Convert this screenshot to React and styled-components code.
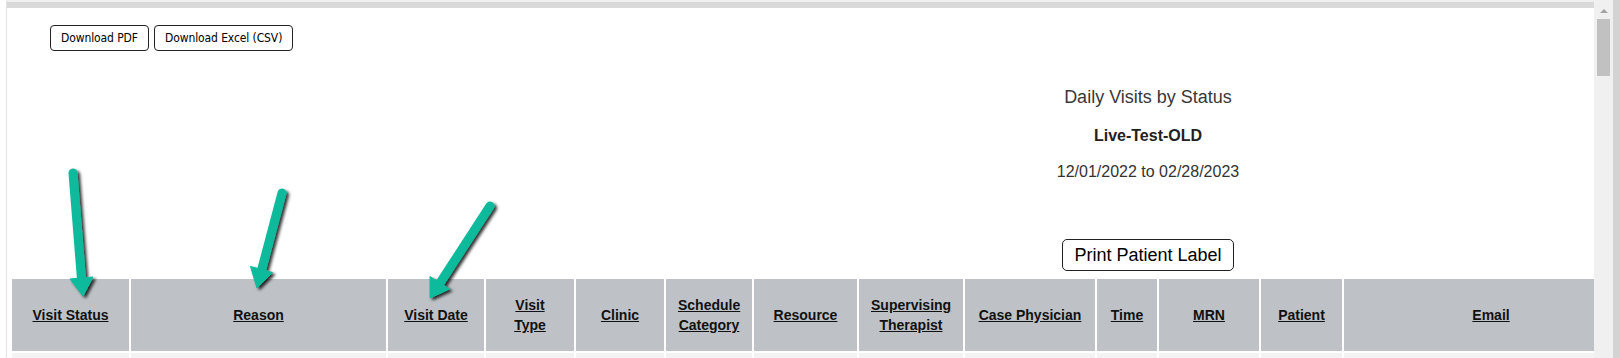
import React from 'react'
import styled, { createGlobalStyle } from 'styled-components'

const GlobalStyle = createGlobalStyle`
    * { box-sizing: border-box; }
    body {
        margin: 0;
        background: #ffffff;
        font-family: "Liberation Sans", Arial, sans-serif;
    }
`;

///////////////////////////////////////////////////////
const Page = styled.div`
    position: relative;
    display: flex;
    width: 1620px;
    height: 358px;
    overflow: hidden;
    background: #ffffff;
`;
///////////////////////////////////////////////////////
const Gutter = styled.div`
    width: 6px;
    flex: none;
`;
///////////////////////////////////////////////////////
const Frame = styled.div`
    flex: 1;
    min-width: 0;
    display: flex;
    border-left: 1px solid #e2e2e2;
`;
///////////////////////////////////////////////////////
const Pane = styled.div`
    flex: 1;
    min-width: 0;
    display: flex;
    flex-direction: column;
`;
///////////////////////////////////////////////////////
const TopStrip = styled.div`
    height: 8px;
    flex: none;
    background: #d9d9d9;
    border-top: 2px solid #eeeeee;
`;
///////////////////////////////////////////////////////
const Viewport = styled.div`
    flex: 1;
    min-height: 0;
    overflow: hidden;
`;
///////////////////////////////////////////////////////
const Scrollbar = styled.div`
    width: 19px;
    flex: none;
    background: #f0f0f0;
    display: flex;
    flex-direction: column;
    align-items: center;
    padding-top: 9px;
`;

const ScrollArrow = styled.div`
    width: 0;
    height: 0;
    border-left: 4px solid transparent;
    border-right: 4px solid transparent;
    border-bottom: 4px solid #a3a3a3;
`;

const Thumb = styled.div`
    width: 13px;
    height: 57px;
    margin-top: 6px;
    background: #c1c1c1;
`;
///////////////////////////////////////////////////////
const RightEdge = styled.div`
    width: 7px;
    flex: none;
    background: #d3d3d3;
`;
///////////////////////////////////////////////////////
const Toolbar = styled.div`
    display: flex;
    gap: 5px;
    padding: 17px 0 0 43px;
`;

const SmallButton = styled.button`
    height: 26px;
    padding: 0 10px;
    border: 1px solid #222;
    border-radius: 4px;
    background: #fff;
    color: #000;
    font-family: "DejaVu Sans Condensed", Roboto, sans-serif;
    font-size: 12px;
    line-height: 14px;
    letter-spacing: -0.1px;
    cursor: pointer;
`;
///////////////////////////////////////////////////////
const Report = styled.div`
    width: 2276px;
    margin-left: 3px;
    text-align: center;
`;

const Title = styled.div`
    margin-top: 35px;
    font-size: 18px;
    line-height: 22px;
    color: #383838;
`;

const Facility = styled.div`
    margin-top: 18px;
    font-size: 16px;
    font-weight: bold;
    line-height: 20px;
    color: #222;
`;

const Range = styled.div`
    margin-top: 16px;
    font-size: 16px;
    line-height: 20px;
    color: #333;
`;

const PrintButton = styled.button`
    margin-top: 57px;
    height: 32px;
    padding: 0 11px;
    border: 1px solid #222;
    border-radius: 5px;
    background: #fff;
    color: #000;
    font-family: "Liberation Sans", Arial, sans-serif;
    font-size: 18px;
    line-height: 20px;
    cursor: pointer;
`;
///////////////////////////////////////////////////////
const Table = styled.table`
    margin-top: 6px;
    width: 1630px;
    table-layout: fixed;
    border-collapse: separate;
    border-spacing: 2px;
    text-align: left;
`;

const Col = styled.col`
    width: ${(p) => p.$w}px;
`;

const Th = styled.th`
    height: 72px;
    padding: 0 12px;
    background: #bec2c6;
    text-align: center;
    vertical-align: middle;
    font-size: 14px;
    font-weight: bold;
    line-height: 20px;
`;

const SortLink = styled.a`
    color: #111;
    text-decoration: underline;
    cursor: pointer;
`;

const Td = styled.td`
    height: 28px;
    background: #f3f3f4;
`;
///////////////////////////////////////////////////////
const Arrows = styled.svg`
    position: absolute;
    left: 0;
    top: 0;
    pointer-events: none;
`;

const columns = [
    { label: 'Visit Status', w: 117 },
    { label: 'Reason', w: 255 },
    { label: 'Visit Date', w: 96 },
    { label: 'Visit Type', w: 88 },
    { label: 'Clinic', w: 88 },
    { label: 'Schedule Category', w: 86 },
    { label: 'Resource', w: 103 },
    { label: 'Supervising Therapist', w: 104 },
    { label: 'Case Physician', w: 130 },
    { label: 'Time', w: 60 },
    { label: 'MRN', w: 100 },
    { label: 'Patient', w: 81 },
    { label: 'Email', w: 294 },
]

// annotation arrows: shaft start, shaft end (head base), head polygon
const arrows = [
    { x1: 73, y1: 173, x2: 81.5, y2: 279, head: '83,296 93,277 70,279' },
    { x1: 282, y1: 193, x2: 261.6, y2: 270, head: '257,288 272.5,272.5 250.5,266.5' },
    { x1: 490, y1: 206, x2: 440, y2: 283, head: '430,298 449.5,289 430,276.5' },
]

const App = () => {
    return (
        <>
            <GlobalStyle />
            <Page>
                <Gutter />
                <Frame>
                    <Pane>
                        <TopStrip />
                        <Viewport>
                            <Toolbar>
                                <SmallButton>Download PDF</SmallButton>
                                <SmallButton>Download Excel (CSV)</SmallButton>
                            </Toolbar>
                            <Report>
                                <Title>Daily Visits by Status</Title>
                                <Facility>Live-Test-OLD</Facility>
                                <Range>12/01/2022 to 02/28/2023</Range>
                                <PrintButton>Print Patient Label</PrintButton>
                                <Table>
                                    <colgroup>
                                        {columns.map((c) => (
                                            <Col key={c.label} $w={c.w} />
                                        ))}
                                    </colgroup>
                                    <thead>
                                        <tr>
                                            {columns.map((c) => (
                                                <Th key={c.label}>
                                                    <SortLink>{c.label}</SortLink>
                                                </Th>
                                            ))}
                                        </tr>
                                    </thead>
                                    <tbody>
                                        <tr>
                                            {columns.map((c) => (
                                                <Td key={c.label} />
                                            ))}
                                        </tr>
                                    </tbody>
                                </Table>
                            </Report>
                        </Viewport>
                    </Pane>
                    <Scrollbar>
                        <ScrollArrow />
                        <Thumb />
                    </Scrollbar>
                </Frame>
                <RightEdge />
                <Arrows width="1620" height="358" viewBox="0 0 1620 358">
                    <defs>
                        <filter id="shadow" x="-50%" y="-50%" width="200%" height="200%">
                            <feDropShadow dx="2.5" dy="2" stdDeviation="1.6" floodColor="#000" floodOpacity="0.8" />
                        </filter>
                    </defs>
                    {arrows.map((a, i) => (
                        <g key={i} filter="url(#shadow)" fill="#0fbb9c" stroke="#0fbb9c">
                            <line x1={a.x1} y1={a.y1} x2={a.x2} y2={a.y2} strokeWidth="9" strokeLinecap="round" />
                            <polygon points={a.head} strokeWidth="1" strokeLinejoin="round" />
                        </g>
                    ))}
                </Arrows>
            </Page>
        </>
    )
}

export default App
